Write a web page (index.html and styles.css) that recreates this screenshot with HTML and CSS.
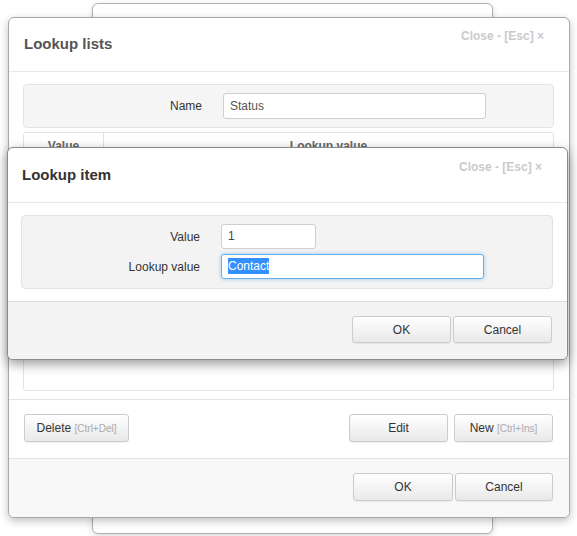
FILE: index.html
```html
<!DOCTYPE html>
<html>
<head>
<meta charset="utf-8">
<link rel="stylesheet" href="styles.css">
</head>
<body>
<div class="win win-back"></div>

<div class="win win-lists">
  <div class="hd">
    <h2 class="title title-muted">Lookup lists</h2>
    <span class="close">Close - [Esc] ×</span>
  </div>
  <div class="bd">
    <div class="panel">
      <div class="row">
        <span class="lbl">Name</span>
        <div class="input input-wide">Status</div>
      </div>
    </div>
    <div class="table">
      <div class="thead">
        <div class="th th-value">Value</div>
        <div class="th th-lookup">Lookup value</div>
      </div>
    </div>
  </div>
  <div class="toolbar">
    <button class="btn btn-delete">Delete <span class="key">[Ctrl+Del]</span></button>
    <div class="btn-group">
      <button class="btn">Edit</button>
      <button class="btn">New <span class="key">[Ctrl+Ins]</span></button>
    </div>
  </div>
  <div class="ft ft-lists">
    <button class="btn">OK</button>
    <button class="btn">Cancel</button>
  </div>
</div>

<div class="win win-item">
  <div class="hd hd-item">
    <h2 class="title">Lookup item</h2>
    <span class="close">Close - [Esc] ×</span>
  </div>
  <div class="bd bd-item">
    <div class="panel panel-item">
      <div class="row">
        <span class="lbl">Value</span>
        <div class="input input-short">1</div>
      </div>
      <div class="row">
        <span class="lbl">Lookup value</span>
        <div class="input input-wide input-focus"><span class="sel">Contact</span></div>
      </div>
    </div>
  </div>
  <div class="ft ft-item">
    <button class="btn">OK</button>
    <button class="btn">Cancel</button>
  </div>
</div>
</body>
</html>
```

FILE: styles.css
```css
html, body {
  margin: 0;
  padding: 0;
  background: #ffffff;
  overflow: hidden;
}
body {
  width: 577px;
  height: 536px;
  position: relative;
  font-family: "Liberation Sans", Arial, sans-serif;
  font-size: 12px;
  color: #333;
}

.win {
  position: absolute;
  box-sizing: border-box;
  background: #fff;
  border: 1px solid #a8a8a8;
  border-radius: 6px;
  display: flex;
  flex-direction: column;
  overflow: hidden;
}
.win-back {
  left: 92px;
  top: 3px;
  width: 401px;
  height: 531px;
  border-color: #b0b0b0;
  box-shadow: 0 2px 6px rgba(0,0,0,0.15);
}
.win-lists {
  left: 8px;
  top: 17px;
  width: 562px;
  height: 501px;
  box-shadow: 0 3px 8px rgba(0,0,0,0.25);
}
.win-item {
  left: 7px;
  top: 147px;
  width: 561px;
  height: 213px;
  border-color: #8a8a8a;
  box-shadow: 0 4px 12px rgba(0,0,0,0.4);
}

.hd {
  display: flex;
  justify-content: space-between;
  align-items: flex-start;
  height: 53px;
  padding: 0 25px 0 15px;
  border-bottom: 1px solid #e8e8e8;
  flex: none;
}
.hd-item {
  height: 54px;
  padding-left: 14px;
}
.title {
  margin: 17px 0 0 0;
  font-size: 15px;
  line-height: 18px;
  font-weight: bold;
  color: #333;
}
.title-muted { color: #555; }
.hd-item .title { margin-top: 18px; }
.close {
  margin-top: 11px;
  font-size: 12px;
  line-height: 14px;
  font-weight: bold;
  color: #cacaca;
}
.hd-item .close { margin-top: 12px; }

.bd {
  padding: 12px 15px 8px 14px;
  border-bottom: 1px solid #e3e3e3;
  display: flex;
  flex-direction: column;
  gap: 4px;
  flex: none;
}
.bd-item {
  padding: 12px 14px 12px 13px;
  border-bottom-color: #dcdcdc;
}

.panel {
  background: #f5f5f5;
  border: 1px solid #e3e3e3;
  border-radius: 4px;
  padding: 8px 0 8px 0;
  display: flex;
  flex-direction: column;
  gap: 5px;
}
.panel-item {
  background: #f3f3f3;
  padding: 8px 0 9px 0;
}
.row {
  display: flex;
  align-items: center;
  gap: 21px;
}
.lbl {
  width: 178px;
  text-align: right;
  font-size: 12px;
  color: #333;
}
.input {
  box-sizing: border-box;
  height: 25px;
  line-height: 23px;
  background: #fff;
  border: 1px solid #cfcfcf;
  border-radius: 3px;
  padding: 0 6px;
  font-size: 12px;
  color: #555;
}
.input-wide { width: 263px; }
.input-short { width: 95px; color: #444; }
.win-lists .input { height: 26px; line-height: 24px; }
.input-focus {
  border-color: #66afe9;
  box-shadow: 0 0 4px rgba(102,175,233,0.6);
}
.sel {
  background: #3390ff;
  color: #fff;
  display: inline-block;
  line-height: 16px;
}

.table {
  border: 1px solid #e3e3e3;
  border-radius: 3px;
  box-sizing: border-box;
  height: 259px;
}
.thead {
  display: flex;
  height: 26px;
  border-bottom: 1px solid #e3e3e3;
}
.th {
  font-weight: bold;
  color: #666;
  text-align: center;
  padding-top: 6px;
  font-size: 12px;
}
.th-value {
  width: 79px;
  border-right: 1px solid #e3e3e3;
}
.th-lookup { flex: 1; }

.toolbar {
  display: flex;
  justify-content: space-between;
  align-items: center;
  padding: 14px 16px 16px 15px;
  border-bottom: 1px solid #e3e3e3;
  flex: none;
}
.btn-group {
  display: flex;
  gap: 6px;
}
.btn {
  box-sizing: border-box;
  width: 99px;
  height: 28px;
  padding: 0;
  font-family: "Liberation Sans", Arial, sans-serif;
  font-size: 12px;
  color: #333;
  background: linear-gradient(#ffffff, #e9e9e9);
  border: 1px solid #cccccc;
  border-radius: 3px;
  box-shadow: 0 1px 1px rgba(0,0,0,0.06);
}
.btn-delete { width: 105px; }
.key {
  font-size: 10px;
  color: #aaa;
}

.ft {
  display: flex;
  justify-content: flex-end;
  gap: 2px;
  flex: 1;
}
.ft-lists {
  background: #f8f8f8;
  padding: 14px 16px 0 0;
}
.ft-lists .btn:first-child { width: 100px; }
.ft-lists .btn:last-child { width: 98px; }
.ft-item {
  background: #f3f3f3;
  padding: 14px 15px 0 0;
}
.ft-item .btn { height: 27px; }
```
